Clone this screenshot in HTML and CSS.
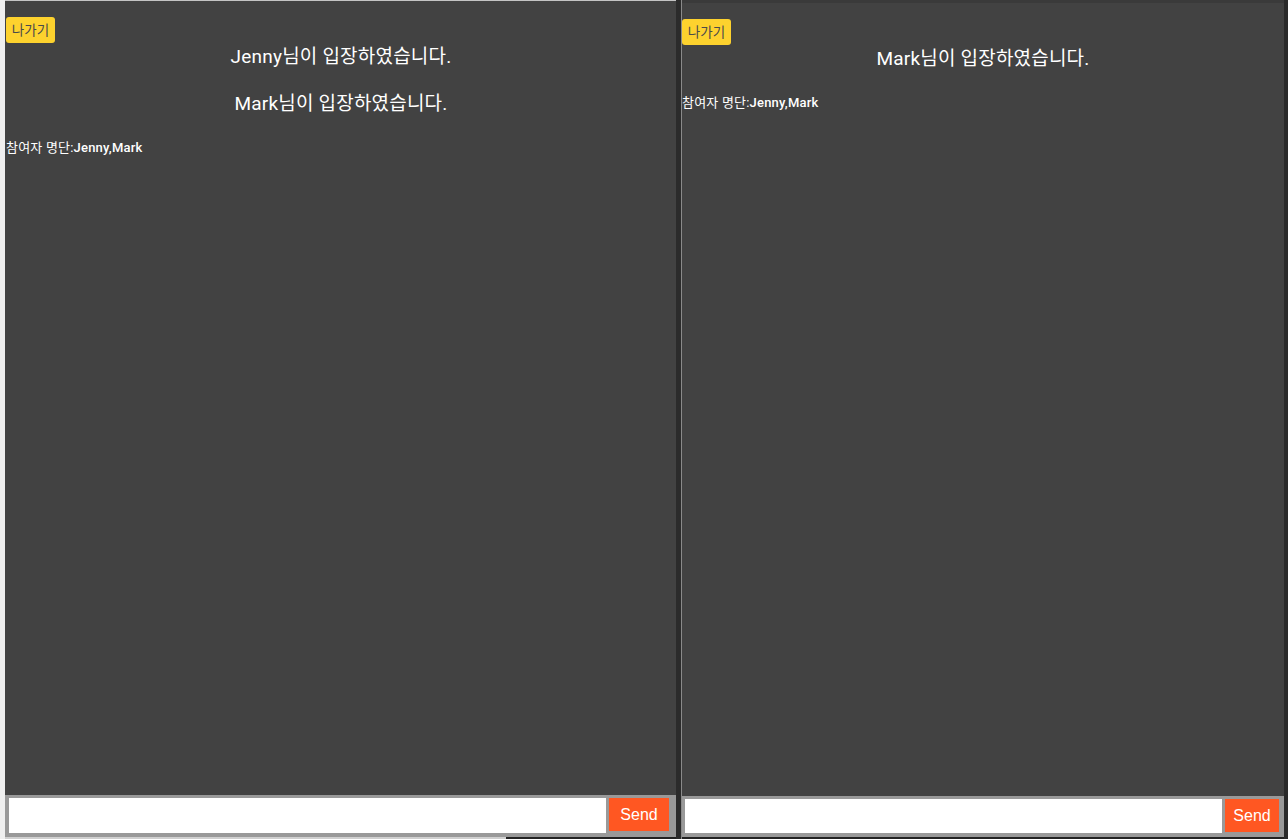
FILE: index.html
```html
<!DOCTYPE html>
<html lang="ko">
<head>
<meta charset="utf-8">
<title>Chat</title>
<link rel="stylesheet" href="styles.css">
</head>
<body>
<div class="desk">
  <div class="edge-left"></div>
  <section class="win win-left">
    <div class="chat">
      <button class="leave">나가기</button>
      <p class="msg">Jenny님이 입장하였습니다.</p>
      <p class="msg">Mark님이 입장하였습니다.</p>
      <p class="members">참여자 명단:<span class="names">Jenny,Mark</span></p>
    </div>
    <form class="bar bar-left">
      <input class="field field-left" type="text">
      <button class="send send-left" type="button">Send</button>
    </form>
    <div class="under-left"><span class="under-light"></span><span class="under-dark"></span></div>
  </section>
  <div class="gap"></div>
  <div class="divider"></div>
  <section class="win win-right">
    <div class="chat">
      <button class="leave">나가기</button>
      <p class="msg">Mark님이 입장하였습니다.</p>
      <p class="members">참여자 명단:<span class="names">Jenny,Mark</span></p>
    </div>
    <form class="bar bar-right">
      <input class="field field-right" type="text">
      <button class="send send-right" type="button">Send</button>
    </form>
    <div class="under-right"></div>
  </section>
  <div class="edge-right"></div>
</div>
</body>
</html>
```

FILE: styles.css
```css
* { box-sizing: border-box; }
html, body { margin: 0; padding: 0; }
body {
  width: 1288px;
  height: 839px;
  overflow: hidden;
  background: #222222;
  font-family: Roboto, "Noto Sans CJK KR", sans-serif;
}
.desk {
  display: flex;
  height: 839px;
}
.edge-left {
  width: 5px;
  background: #efefef;
}
.win {
  display: flex;
  flex-direction: column;
  height: 839px;
}
.win-left {
  width: 671px;
  border-top: 1px solid #c4c4c4;
}
.win-right {
  width: 602px;
  border-top: 3px solid #3a3a3a;
}
.gap {
  width: 5px;
  background: #2b2b2b;
}
.divider {
  width: 1px;
  background: #8a8a8a;
}
.edge-right {
  width: 4px;
  background: #2a2a2a;
}
.chat {
  flex: 1;
  background: #424242;
  padding-top: 16px;
  display: flex;
  flex-direction: column;
  align-items: flex-start;
}
.win-left .chat { padding-left: 1px; }
.leave {
  width: 49px;
  height: 26px;
  padding: 0;
  border: none;
  border-radius: 3px;
  background: #fdd22e;
  color: #4a4a4a;
  font-family: Roboto, "Noto Sans CJK KR", sans-serif;
  font-size: 13.5px;
  line-height: 26px;
  text-align: center;
  margin-bottom: 1px;
}
.msg {
  align-self: stretch;
  margin: 0 0 21px;
  text-align: center;
  color: #ffffff;
  font-size: 19px;
  letter-spacing: 0.2px;
  line-height: 26px;
}
.members {
  margin: 0;
  color: #ffffff;
  font-size: 13px;
  letter-spacing: 0.2px;
  line-height: 19px;
}
.names {
  font-weight: 500;
}
.bar {
  display: flex;
  align-items: flex-start;
  gap: 3px;
  background: #999999;
  padding-top: 3px;
}
.bar-left {
  height: 42px;
  padding-left: 4px;
}
.bar-right {
  height: 41px;
  padding-left: 3px;
}
.field {
  border: none;
  background: #ffffff;
  outline: none;
  margin: 0;
}
.field-left { width: 597px; height: 35px; }
.field-right { width: 537px; height: 34px; }
.send {
  border: none;
  margin: 0;
  padding: 0;
  height: 33px;
  background: #ff5722;
  color: #ffffff;
  font-family: "Liberation Sans", Arial, sans-serif;
  font-size: 16px;
}
.send-left { width: 60px; }
.send-right { width: 54px; }
.under-left {
  display: flex;
  height: 2px;
  flex: none;
}
.under-light { width: 501px; background: #cfcfcf; }
.under-dark { flex: 1; background: #222222; }
.under-right {
  height: 2px;
  flex: none;
  background: #222222;
}
```
